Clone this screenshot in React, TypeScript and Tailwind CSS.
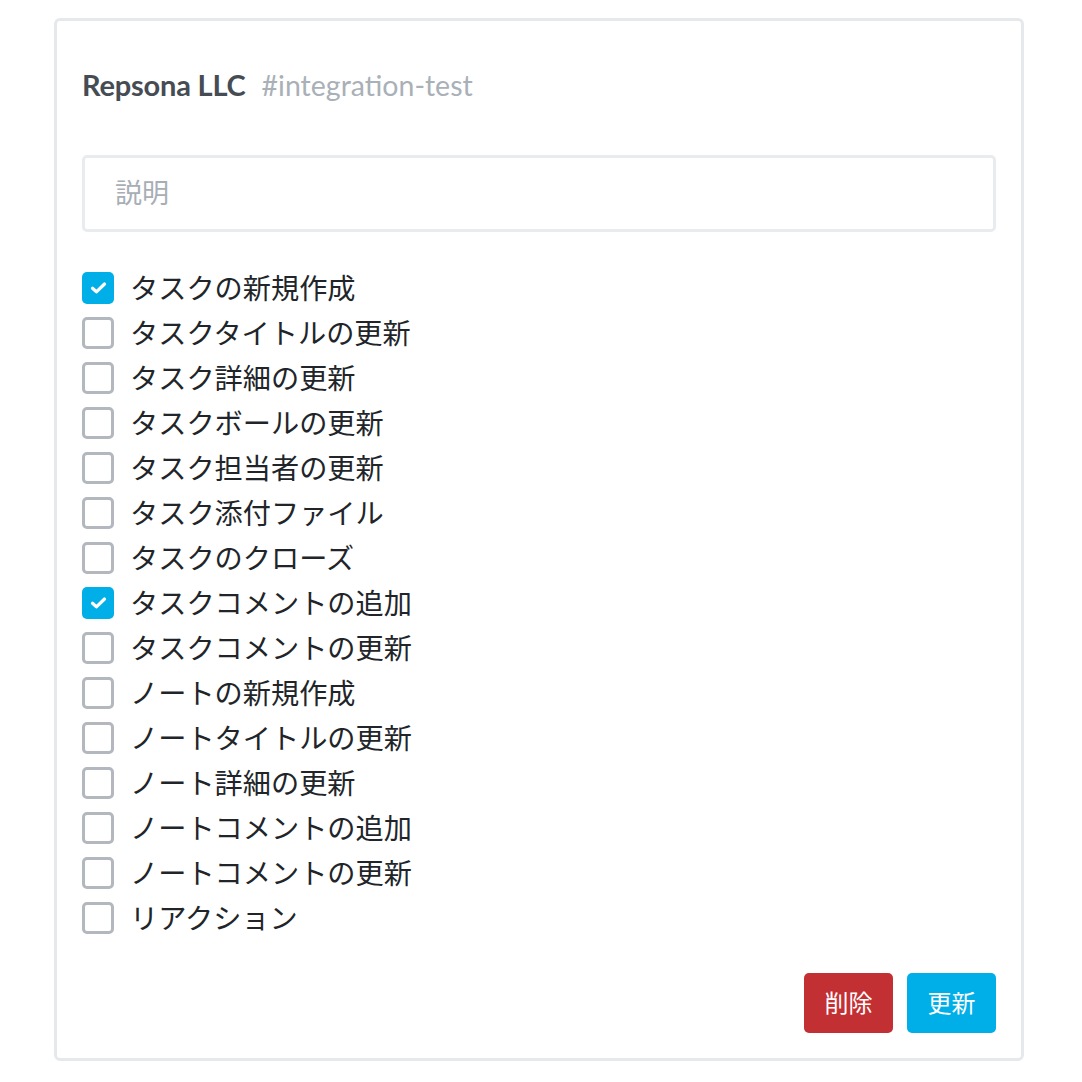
const events = [
  { label: "タスクの新規作成", checked: true },
  { label: "タスクタイトルの更新", checked: false },
  { label: "タスク詳細の更新", checked: false },
  { label: "タスクボールの更新", checked: false },
  { label: "タスク担当者の更新", checked: false },
  { label: "タスク添付ファイル", checked: false },
  { label: "タスクのクローズ", checked: false },
  { label: "タスクコメントの追加", checked: true },
  { label: "タスクコメントの更新", checked: false },
  { label: "ノートの新規作成", checked: false },
  { label: "ノートタイトルの更新", checked: false },
  { label: "ノート詳細の更新", checked: false },
  { label: "ノートコメントの追加", checked: false },
  { label: "ノートコメントの更新", checked: false },
  { label: "リアクション", checked: false },
];

function Checkbox({ checked }: { checked: boolean }) {
  if (checked) {
    return (
      <span className="flex h-[32px] w-[32px] shrink-0 items-center justify-center rounded-[5px] bg-[#00aee8]">
        <svg width="17" height="14" viewBox="0 0 17 14" fill="none">
          <path
            d="M2.5 7.3 6.4 10.8 14.5 3"
            stroke="white"
            strokeWidth="3.2"
            strokeLinecap="round"
            strokeLinejoin="round"
          />
        </svg>
      </span>
    );
  }
  return (
    <span className="h-[32px] w-[32px] shrink-0 rounded-[5px] border-[3px] border-[#b2b8be] bg-white" />
  );
}

export default function App() {
  return (
    <div
      className="min-h-[1082px] bg-white pt-[18px]"
      style={{ fontFamily: 'Lato, "Noto Sans CJK JP", sans-serif' }}
    >
      <div className="ml-[54px] w-[970px] rounded-[6px] border-[3px] border-[#e6e9ec] px-[25px] pb-[25px] pt-[46px]">
        <div className="flex items-baseline leading-[36px]">
          <span className="text-[29px] font-bold tracking-[-0.2px] text-[#464c53]">
            Repsona LLC
          </span>
          <span className="ml-[16px] text-[28.5px] text-[#a9b0b7]">#integration-test</span>
        </div>

        <div className="mt-[52px] flex h-[77px] items-center rounded-[5px] border-[3px] border-[#e9ecef] px-[30px]">
          <span className="text-[27px] text-[#a7aeb5]">説明</span>
        </div>

        <div className="mt-[40px] flex flex-col gap-[13px]">
          {events.map((e) => (
            <label key={e.label} className="flex h-[32px] items-center">
              <Checkbox checked={e.checked} />
              <span className="ml-[16px] text-[28.2px] leading-none text-[#212529]">
                {e.label}
              </span>
            </label>
          ))}
        </div>

        <div className="mt-[39px] flex justify-end gap-[14px]">
          <button className="flex h-[60px] w-[89px] items-center justify-center rounded-[5px] bg-[#c33034] text-[24px] text-white">
            削除
          </button>
          <button className="flex h-[60px] w-[89px] items-center justify-center rounded-[5px] bg-[#00aee8] text-[24px] text-white">
            更新
          </button>
        </div>
      </div>
    </div>
  );
}
